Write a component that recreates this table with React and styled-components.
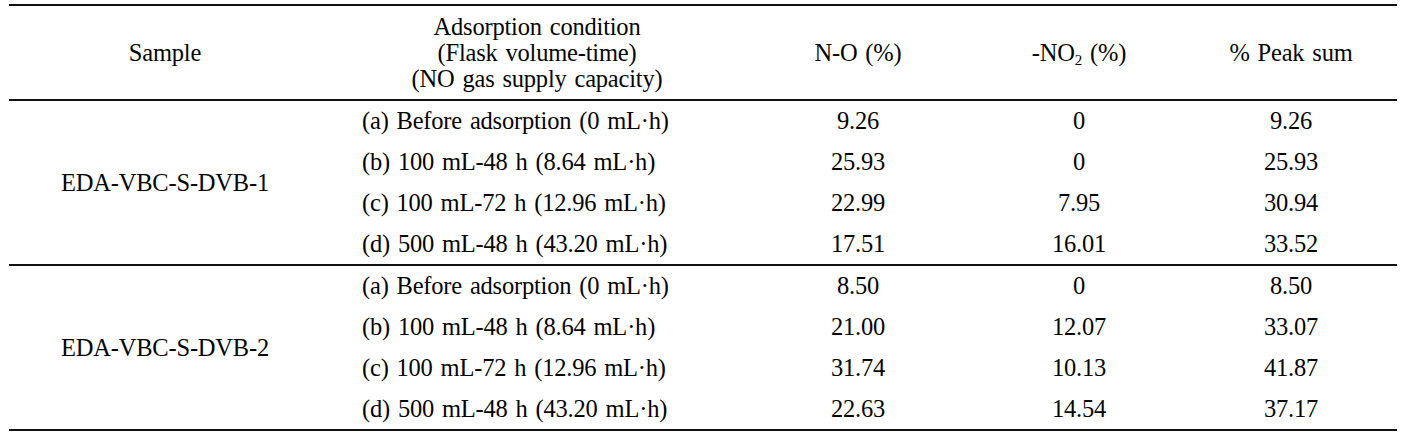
import React from "react";
import styled, { createGlobalStyle } from "styled-components";

const GlobalStyle = createGlobalStyle`
  html, body { margin: 0; padding: 0; background: #ffffff; }
  body {
    font-family: "Liberation Serif", "Times New Roman", serif;
    color: #050505;
  }
`;

const COLS = "312px 432px 210px 232px 1fr";

const Page = styled.div`
  padding: 4px 8px 0 9px;
`;

const Table = styled.div`
  border-top: 2px solid #111111;
  font-size: 24.5px;
  letter-spacing: -0.2px;
  word-spacing: 2px;
  line-height: 26px;
`;

const HeaderRow = styled.div`
  display: grid;
  grid-template-columns: ${COLS};
  height: 93px;
  border-bottom: 2px solid #111111;
`;

const HeadCell = styled.div`
  display: flex;
  align-items: center;
  justify-content: center;
  text-align: center;
  padding-right: ${(p) => (p.$last ? "10px" : "0")};
`;

const Group = styled.div`
  display: grid;
  grid-template-columns: ${COLS};
  grid-template-rows: repeat(4, 1fr);
  height: 163px;
  border-bottom: 2px solid #111111;
`;

const SampleCell = styled.div`
  grid-row: 1 / span 4;
  display: flex;
  align-items: center;
  justify-content: center;
`;

const ConditionCell = styled.div`
  display: flex;
  align-items: center;
  padding-left: 41px;
  white-space: nowrap;
`;

const NumCell = styled.div`
  display: flex;
  align-items: center;
  justify-content: center;
  padding-right: ${(p) => (p.$last ? "10px" : "0")};
`;

const Sub = styled.sub`
  font-size: 15px;
  vertical-align: -4px;
  line-height: 0;
`;

const groups = [
  {
    sample: "EDA-VBC-S-DVB-1",
    rows: [
      ["(a) Before adsorption (0 mL·h)", "9.26", "0", "9.26"],
      ["(b) 100 mL-48 h (8.64 mL·h)", "25.93", "0", "25.93"],
      ["(c) 100 mL-72 h (12.96 mL·h)", "22.99", "7.95", "30.94"],
      ["(d) 500 mL-48 h (43.20 mL·h)", "17.51", "16.01", "33.52"],
    ],
  },
  {
    sample: "EDA-VBC-S-DVB-2",
    rows: [
      ["(a) Before adsorption (0 mL·h)", "8.50", "0", "8.50"],
      ["(b) 100 mL-48 h (8.64 mL·h)", "21.00", "12.07", "33.07"],
      ["(c) 100 mL-72 h (12.96 mL·h)", "31.74", "10.13", "41.87"],
      ["(d) 500 mL-48 h (43.20 mL·h)", "22.63", "14.54", "37.17"],
    ],
  },
];

export default function App() {
  return (
    <Page>
      <GlobalStyle />
      <Table>
        <HeaderRow>
          <HeadCell>Sample</HeadCell>
          <HeadCell>
            Adsorption condition
            <br />
            (Flask volume-time)
            <br />
            (NO gas supply capacity)
          </HeadCell>
          <HeadCell>N-O (%)</HeadCell>
          <HeadCell>
            <span>
              -NO<Sub>2</Sub> (%)
            </span>
          </HeadCell>
          <HeadCell $last>% Peak sum</HeadCell>
        </HeaderRow>
        {groups.map((g) => (
          <Group key={g.sample}>
            <SampleCell>{g.sample}</SampleCell>
            {g.rows.map((r) => (
              <React.Fragment key={r[0]}>
                <ConditionCell>{r[0]}</ConditionCell>
                <NumCell>{r[1]}</NumCell>
                <NumCell>{r[2]}</NumCell>
                <NumCell $last>{r[3]}</NumCell>
              </React.Fragment>
            ))}
          </Group>
        ))}
      </Table>
    </Page>
  );
}
